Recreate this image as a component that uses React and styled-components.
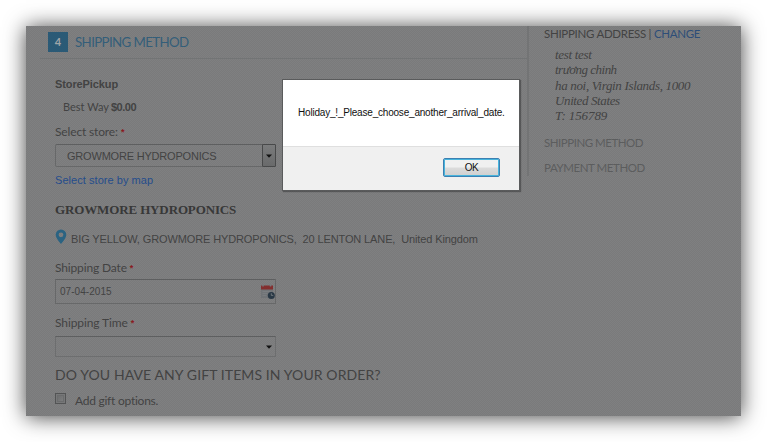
import React from "react";
import styled, { createGlobalStyle } from "styled-components";

const Global = createGlobalStyle`
  * { box-sizing: border-box; }
  body { margin: 0; background: #fff; overflow: hidden; }
`;

const sans = '"Liberation Sans", Arial, sans-serif';
const display = 'Lato, "Open Sans", sans-serif';

const Page = styled.div`
  width: 767px;
  height: 442px;
  padding: 26px;
`;

const Screen = styled.main`
  position: relative;
  display: flex;
  width: 715px;
  height: 390px;
  background-color: #7f8081;
  background-image:
    conic-gradient(rgba(0, 0, 0, 0.045) 25%, transparent 0 50%, rgba(0, 0, 0, 0.045) 0 75%, transparent 0);
  background-size: 2px 2px;
  box-shadow: 0 1px 20px 0 rgba(0, 0, 0, 0.74);
  color: #434343;
`;

const Main = styled.section`
  width: 501px;
  height: 390px;
  padding-left: 14px;
`;

const StepHeader = styled.header`
  display: flex;
  align-items: center;
  height: 33px;
  padding: 0 0 1px 8px;
  border-bottom: 1px solid #727475;
`;

const StepNumber = styled.span`
  width: 20px;
  height: 20px;
  margin-right: 7px;
  background: #2b5a76;
  color: #a0a5a8;
  font: bold 11px/20px ${display};
  text-align: center;
`;

const StepTitle = styled.h1`
  margin: 0;
  color: #345e79;
  font: 400 13.3px/20px ${display};
  letter-spacing: ${(p) => p.$track}px;
  white-space: nowrap;
`;

const Form = styled.div`
  display: flex;
  flex-direction: column;
  align-items: flex-start;
  padding-left: 15px;
`;

const Line = styled.div`
  display: flex;
  align-items: center;
  height: 16px;
  margin-top: ${(p) => p.$gap}px;
  padding-left: ${(p) => p.$indent || 0}px;
  font-family: ${(p) => p.$font || sans};
  font-size: ${(p) => p.$size}px;
  font-weight: ${(p) => (p.$bold ? 700 : 400)};
  line-height: 16px;
  letter-spacing: ${(p) => p.$track || 0}px;
  color: ${(p) => p.$color || "inherit"};
  white-space: pre;
`;

const Price = styled.b`
  margin-left: 2px;
  font-family: ${sans};
  font-size: 11px;
  letter-spacing: -0.5px;
`;

const Required = styled.span`
  margin-left: 3px;
  color: #8a1a20;
  font: bold 9px/16px ${sans};
`;

const Field = styled.div`
  display: flex;
  align-items: center;
  justify-content: space-between;
  width: 221px;
  height: ${(p) => p.$h}px;
  margin-top: ${(p) => p.$gap}px;
  padding-left: ${(p) => p.$pad}px;
  border: 1px solid ${(p) => p.$edge || "#676869"};
  border-top-color: #5e5f60;
  border-radius: ${(p) => p.$radius}px;
  font: ${(p) => p.$size}px/16px ${sans};
  letter-spacing: ${(p) => p.$track || 0}px;
`;

const SelectButton = styled.span`
  display: grid;
  place-items: center;
  width: 14px;
  height: 23px;
  margin-right: -1px;
  border: 1px solid ${(p) => (p.$plain ? "transparent" : "#48494a")};
  border-radius: 1px;
  background: ${(p) => (p.$plain ? "none" : "linear-gradient(#7a7b7c, #696a6b)")};
`;

const CalendarSlot = styled.span`
  display: flex;
  width: 15px;
  height: 15px;
`;

const Pin = styled.svg`
  width: 12px;
  height: 16px;
  margin: -5px 4px 0 0;
`;

const Checkbox = styled.span`
  width: 11px;
  height: 11px;
  margin: -5px 9px 0 0;
  border: 1px solid #535455;
  background: linear-gradient(135deg, #676869, #828384);
  box-shadow: inset 0 0 0 1px #777879, inset 0 0 0 2px #6b6c6d;
`;

const Aside = styled.aside`
  width: 200px;
  height: 150px;
  padding-left: 15px;
  border-left: 2px solid #737475;
`;

const Link = styled.a`
  color: #2e4e78;
`;

const Address = styled.address`
  margin: 5px 0 0 11px;
  font: italic 13px/15.3px "Liberation Serif", serif;
`;

const AddressLine = styled.div`
  letter-spacing: ${(p) => p.$track}px;
  white-space: nowrap;
`;

const Dialog = styled.div`
  position: absolute;
  left: 256px;
  top: 53px;
  width: 238px;
  height: 112px;
  border: 1px solid #5a5b5c;
  background: #fff;
  box-shadow: 1px 1px 1px rgba(0, 0, 0, 0.3);
  color: #111;
`;

const Message = styled.p`
  height: 67px;
  margin: 0;
  padding: 25px 0 0 15px;
  border-bottom: 1px solid #dfdfdf;
  font: 10px/16px ${sans};
  letter-spacing: ${(p) => p.$track}px;
  white-space: nowrap;
`;

const DialogFooter = styled.div`
  display: flex;
  justify-content: flex-end;
  height: 43px;
  padding: 11px 19px 0 0;
  background: #f0f0f0;
`;

const OkButton = styled.button`
  width: 57px;
  height: 19px;
  padding: 0;
  border: 1px solid #3c7fb1;
  border-radius: 2px;
  background: linear-gradient(#f0f0f0 0 48%, #dcdcdc 52%, #cfcfcf);
  box-shadow: inset 0 0 0 1px #48b4dc;
  font: 10px/16px ${sans};
  letter-spacing: -0.5px;
  color: #111;
`;

const Arrow = () => (
  <svg width="6" height="4" viewBox="0 0 6 4">
    <path d="M0 .5h6L3 3.8z" fill="#111" />
  </svg>
);

const Calendar = () => (
  <svg width="15" height="15" viewBox="0 0 15 15">
    <path d="M1 5h12v9H1z" fill="#717477" />
    <path d="M2.500 7.500h8M2.500 9.500h5M2.500 11.500h4" stroke="#7a7d80" />
    <path d="M1 1.500h12v4H1z" fill="#832f2f" />
    <path d="M3 .5v2M10.500 .5v2" stroke="#777b7e" strokeWidth="1.4" />
    <circle cx="11.300" cy="11.400" r="3.500" fill="#293845" />
    <path d="M11.300 9.300v2.100h2" fill="none" stroke="#7d8386" strokeWidth=".8" />
  </svg>
);

const addressLines = [
  ["test test", -0.3],
  ["trương chinh", -0.52],
  ["ha noi, Virgin Islands, 1000", -0.33],
  ["United States", -0.38],
  ["T: 156789", -0.1],
];

export default function App() {
  return (
    <Page>
      <Global />
      <Screen>
        <Main>
          <StepHeader>
            <StepNumber>4</StepNumber>
            <StepTitle $track={-0.62}>SHIPPING METHOD</StepTitle>
          </StepHeader>
          <Form>
            <Line $gap={17} $size={11} $bold $track={-0.1}>StorePickup</Line>
            <Line $gap={7} $size={11} $indent={8} $font={display}>
              <span>Best Way</span>
              <Price>$0.00</Price>
            </Line>
            <Line $gap={9} $size={12} $font={display} $track={-0.15}>
              <span>Select store:</span>
              <Required>*</Required>
            </Line>
            <Field $gap={4} $h={23} $pad={11} $radius={2} $size={11} $track={-0.2}>
              GROWMORE HYDROPONICS
              <SelectButton><Arrow /></SelectButton>
            </Field>
            <Line $gap={5} $size={11} $color="#254d8c" $track={0.05}>Select store by map</Line>
            <Line $gap={14} $size={13} $bold $font='"Liberation Serif", serif' $color="#383838" $track={-0.13}>GROWMORE HYDROPONICS</Line>
            <Line $gap={13} $size={11} $track={-0.12}>
              <Pin viewBox="0 0 12 16">
                <path fillRule="evenodd" fill="#2b6382" d="M6 .5A5.300 5.300 0 0 0 .7 5.800C.7 9.300 6 15 6 15s5.300-5.700 5.300-9.200A5.300 5.300 0 0 0 6 .5zm0 2.900a2.400 2.400 0 1 1 0 4.800 2.400 2.400 0 0 1 0-4.800z" />
              </Pin>
              <span>BIG YELLOW, GROWMORE HYDROPONICS,  20 LENTON LANE,  United Kingdom</span>
            </Line>
            <Line $gap={13} $size={12} $font={display} $track={-0.15}>
              <span>Shipping Date</span>
              <Required>*</Required>
            </Line>
            <Field $gap={3} $h={25} $pad={4} $radius={1} $size={10} $track={0.05}>
              07-04-2015
              <CalendarSlot><Calendar /></CalendarSlot>
            </Field>
            <Line $gap={11} $size={12} $font={display} $track={-0.1}>
              <span>Shipping Time</span>
              <Required>*</Required>
            </Line>
            <Field $gap={5} $h={21} $pad={4} $radius={0} $size={10} $edge="#6d6e6f">
              <span />
              <SelectButton $plain><Arrow /></SelectButton>
            </Field>
            <Line $gap={10} $size={14} $font={display} $track={0.1}>DO YOU HAVE ANY GIFT ITEMS IN YOUR ORDER?</Line>
            <Line $gap={10} $size={12} $font={display} $track={-0.25}>
              <Checkbox />
              <span>Add gift options.</span>
            </Line>
          </Form>
        </Main>
        <Aside>
          <Line $gap={0} $size={11.5} $font={display} $track={-0.29}>
            <span>SHIPPING ADDRESS | <Link>CHANGE</Link></span>
          </Line>
          <Address>
            {addressLines.map(([text, track]) => (
              <AddressLine key={text} $track={track}>{text}</AddressLine>
            ))}
          </Address>
          <Line $gap={12} $size={11.5} $font={display} $color="#5c5d5e" $track={-0.48}>SHIPPING METHOD</Line>
          <Line $gap={9} $size={11.5} $font={display} $color="#5c5d5e" $track={-0.42}>PAYMENT METHOD</Line>
        </Aside>
        <Dialog role="alertdialog">
          <Message $track={-0.2}>Holiday_!_Please_choose_another_arrival_date.</Message>
          <DialogFooter>
            <OkButton>OK</OkButton>
          </DialogFooter>
        </Dialog>
      </Screen>
    </Page>
  );
}
